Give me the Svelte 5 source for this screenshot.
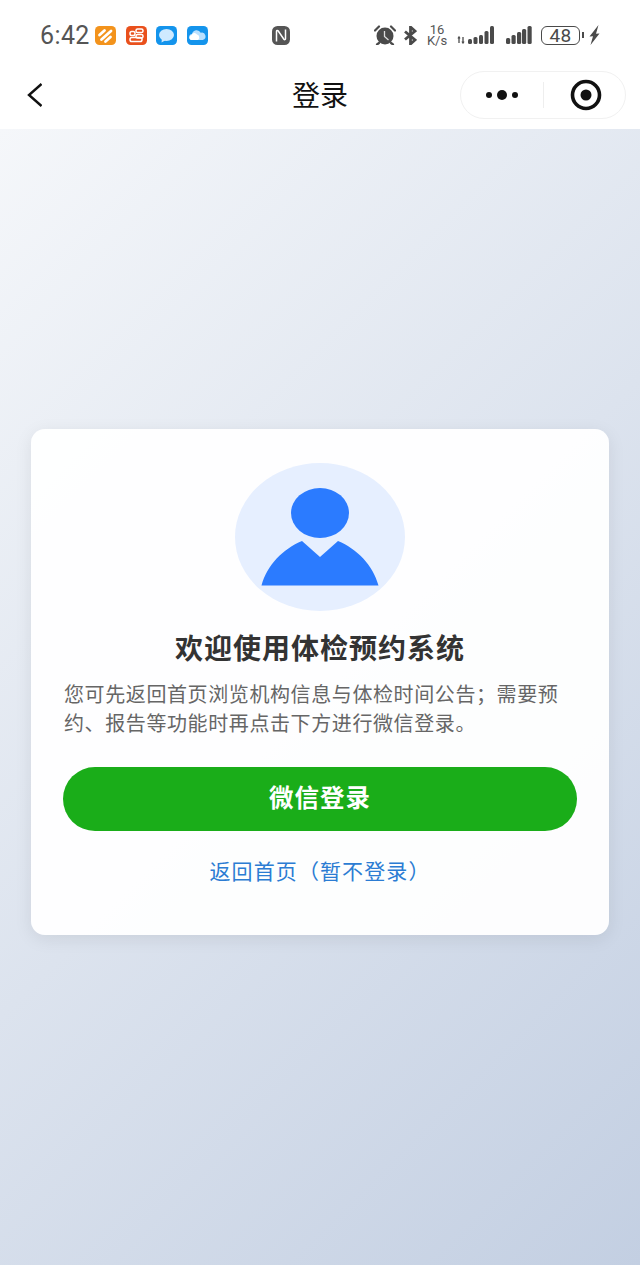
<script>
	const signalA = [
		[11, 5], [16.5, 7], [22, 9], [27.5, 13], [33, 18]
	];
	const signalB = [
		[0, 6], [5.5, 9], [11, 12], [16, 15], [21.5, 18]
	];
</script>

<div class="page">
	<header class="top">
		<div class="status">
			<span class="time">6:42</span>
			<div class="apps">
				<svg class="app" viewBox="0 0 21 19">
					<rect width="21" height="19" rx="4.5" fill="#f3931c" />
					<path d="M4.500 9l5-4.500M6.500 13.500l9.500-8.500M10.500 15.500l5-4.500" stroke="#fff" stroke-width="2.800" stroke-linecap="round" fill="none" />
				</svg>
				<svg class="app" viewBox="0 0 21 19">
					<rect width="21" height="19" rx="4.5" fill="#e9501c" />
					<g fill="none" stroke="#fff" stroke-width="1.500">
						<rect x="10" y="3" width="7" height="3.600" rx="1.600" />
						<rect x="10" y="8.400" width="7" height="3.600" rx="1.600" />
						<rect x="4" y="5.500" width="5" height="4" rx="1.800" />
						<rect x="4" y="11.500" width="12" height="4" rx="1.800" />
					</g>
				</svg>
				<svg class="app" viewBox="0 0 21 19">
					<rect width="21" height="19" rx="4.5" fill="#1494ec" />
					<ellipse cx="10.500" cy="9" rx="7.500" ry="6" fill="#cfeaff" />
					<path d="M6 12.500l-.5 4 4.500-2.500z" fill="#cfeaff" />
				</svg>
				<svg class="app" viewBox="0 0 21 19">
					<rect width="21" height="19" rx="4.5" fill="#1494ec" />
					<path d="M5.500 14a3 3 0 0 1-.4-6 4.600 4.600 0 0 1 8.600-1.200A3.700 3.700 0 0 1 15.800 14z" fill="#b9e0ff" />
					<path d="M4 14a2.600 2.600 0 0 1 .6-5 3 3 0 0 1 5.400-.4A3 3 0 0 1 11 14z" fill="#fff" />
				</svg>
			</div>
			<svg class="nfc" viewBox="0 0 18 19">
				<rect width="18" height="19" rx="5.500" fill="#555" />
				<path d="M4.500 15.500V5.500c0-1 1-1.300 1.600-.7l5.800 8.400c.6.800 1.600.5 1.600-.5V3.500" fill="none" stroke="#fff" stroke-width="1.500" />
			</svg>
			<div class="indicators">
				<svg class="alarm" viewBox="0 0 22 20">
					<circle cx="11" cy="11" r="8.500" fill="#4a4a4a" />
					<path d="M1 5.500L5 1.500M21 5.500L17 1.500M5 18l-2 1.500M17 18l2 1.500" stroke="#4a4a4a" stroke-width="2.200" stroke-linecap="round" />
					<path d="M10.500 6v5.500l4 3.500" stroke="#ddd" stroke-width="1.300" fill="none" />
				</svg>
				<svg class="bt" viewBox="0 0 13 19">
					<path d="M1 5.500l10 8.500-4.500 4V1l4.500 4-10 8.500" fill="none" stroke="#4a4a4a" stroke-width="2.800" />
				</svg>
				<div class="speed"><span>16</span><span>K/s</span></div>
				<svg class="signal-a" viewBox="0 0 37 18">
					<path d="M2 11v6M1 12.500l1-1.500 1 1.500M6 11v6M5 15.500l1 1.500 1-1.500" stroke="#4a4a4a" stroke-width="1.300" fill="none" />
					{#each signalA as [x, h]}
						<rect x={x} y={18 - h} width="4" height={h} rx="1.500" fill="#4a4a4a" />
					{/each}
				</svg>
				<svg class="signal-b" viewBox="0 0 26 18">
					{#each signalB as [x, h]}
						<rect x={x} y={18 - h} width="4.200" height={h} rx="1.500" fill="#4a4a4a" />
					{/each}
				</svg>
				<div class="battery">
					<span class="level">48</span>
					<i class="nub"></i>
				</div>
				<svg class="bolt" viewBox="0 0 11 20">
					<path d="M9.500 0L.5 11.500l3.500-.3L1.500 20 10.500 8.500 7 8.800z" fill="#4a4a4a" />
				</svg>
			</div>
		</div>
		<nav class="nav">
			<svg class="back" viewBox="0 0 15 24">
				<path d="M14.500 1L2 12l12.500 11" fill="none" stroke="#111" stroke-width="2.400" />
			</svg>
			<h1>登录</h1>
			<div class="capsule">
				<div class="more"><i></i><i class="big"></i><i></i></div>
				<span class="divider"></span>
				<svg class="target" viewBox="0 0 32 32">
					<circle cx="16" cy="16" r="13.500" fill="none" stroke="#111" stroke-width="3.600" />
					<circle cx="16" cy="16" r="5.500" fill="#111" />
				</svg>
			</div>
		</nav>
	</header>

	<main>
		<section class="card">
			<div class="avatar">
				<svg viewBox="0 0 170 148">
					<ellipse cx="85" cy="50" rx="29" ry="25" fill="#2b7bff" />
					<path d="M26.500 122.500C32 102 48 86 67 78L85 94 103 78C122 86 138 102 143.500 122.500Z" fill="#2b7bff" />
				</svg>
			</div>
			<h2>欢迎使用体检预约系统</h2>
			<p>您可先返回首页浏览机构信息与体检时间公告；需要预约、报告等功能时再点击下方进行微信登录。</p>
			<button class="login">微信登录</button>
			<a class="home" href="#home">返回首页（暂不登录）</a>
		</section>
	</main>
</div>

<style>
	:global(body) {
		margin: 0;
		font-family: "Noto Sans CJK SC", "Noto Sans", sans-serif;
	}

	.page {
		width: 640px;
		height: 1265px;
		display: flex;
		flex-direction: column;
	}

	.top {
		background: #fff;
		height: 129px;
		flex: none;
	}

	.status {
		height: 70px;
		display: flex;
		align-items: center;
		padding-left: 40px;
		box-sizing: border-box;
	}

	.time {
		font-family: Roboto, sans-serif;
		font-size: 25px;
		color: #555;
		width: 49px;
		letter-spacing: 0.4px;
	}

	.apps {
		display: flex;
		gap: 9.7px;
		margin-left: 6px;
	}

	.app {
		width: 21px;
		height: 19px;
		display: block;
	}

	.nfc {
		width: 18px;
		height: 19px;
		margin-left: 64px;
	}

	.indicators {
		display: flex;
		align-items: center;
		margin-left: 84px;
	}

	.alarm {
		width: 22px;
		height: 20px;
	}

	.bt {
		width: 13px;
		height: 19px;
		margin-left: 8px;
	}

	.speed {
		display: flex;
		flex-direction: column;
		align-items: center;
		width: 22px;
		margin-left: 9px;
		font-family: Roboto, sans-serif;
		font-size: 13px;
		line-height: 11.5px;
		color: #555;
	}

	.signal-a {
		width: 37px;
		height: 18px;
		margin-left: 9px;
	}

	.signal-b {
		width: 26px;
		height: 18px;
		margin-left: 12px;
	}

	.battery {
		position: relative;
		width: 39px;
		height: 19px;
		margin-left: 9px;
		border: 1.5px solid #4a4a4a;
		border-radius: 6px;
		box-sizing: border-box;
		display: flex;
		align-items: center;
		justify-content: center;
	}

	.level {
		font-family: Roboto, sans-serif;
		font-size: 19px;
		line-height: 1;
		color: #4a4a4a;
		letter-spacing: 0.5px;
	}

	.nub {
		position: absolute;
		right: -5px;
		top: 5px;
		width: 2px;
		height: 6px;
		background: #4a4a4a;
	}

	.bolt {
		width: 11px;
		height: 20px;
		margin-left: 9px;
	}

	.nav {
		position: relative;
		height: 59px;
		display: flex;
		align-items: center;
		justify-content: space-between;
		padding: 0 14px 10px 27px;
		box-sizing: border-box;
	}

	.back {
		width: 15px;
		height: 24px;
	}

	h1 {
		position: absolute;
		left: 0;
		right: 0;
		top: 4px;
		margin: 0;
		text-align: center;
		font-size: 28px;
		line-height: 40px;
		font-weight: 400;
		color: #111;
	}

	.capsule {
		width: 166px;
		height: 48px;
		border: 1px solid #f1f1f1;
		border-radius: 24px;
		box-sizing: border-box;
		display: flex;
		align-items: center;
		background: #fff;
	}

	.more {
		width: 82px;
		display: flex;
		align-items: center;
		justify-content: center;
		gap: 5px;
	}

	.more i {
		width: 6px;
		height: 6px;
		border-radius: 50%;
		background: #111;
	}

	.more i.big {
		width: 10px;
		height: 10px;
	}

	.divider {
		width: 1px;
		height: 26px;
		background: #eee;
	}

	.target {
		width: 32px;
		height: 32px;
		margin-left: 26px;
	}

	main {
		flex: 1;
		background: linear-gradient(135deg, #f5f7fa 0%, #c3cfe2 100%);
		display: flex;
		justify-content: center;
		padding-top: 300px;
		box-sizing: border-box;
	}

	.card {
		width: 578px;
		height: 506px;
		box-sizing: border-box;
		padding: 34px 32px 0;
		background: rgba(255, 255, 255, 0.95);
		border-radius: 14px;
		box-shadow: 0 4px 18px rgba(0, 0, 0, 0.08);
		display: flex;
		flex-direction: column;
		align-items: center;
	}

	.avatar {
		width: 170px;
		height: 148px;
		flex: none;
		border-radius: 50%;
		background: #e6efff;
	}

	.avatar svg {
		display: block;
		width: 170px;
		height: 148px;
	}

	h2 {
		margin: 16px 0 0;
		font-size: 28px;
		letter-spacing: 1px;
		line-height: 40px;
		font-weight: 700;
		color: #333;
		text-align: center;
	}

	p {
		margin: 12px 0 0;
		width: 100%;
		box-sizing: border-box;
		padding-left: 1px;
		font-size: 20px;
		letter-spacing: 0.6px;
		line-height: 29px;
		color: #666;
	}

	.login {
		margin-top: 30px;
		width: 100%;
		height: 64px;
		flex: none;
		border: none;
		border-radius: 32px;
		background: #1aad19;
		color: #fff;
		font-family: inherit;
		font-size: 24.5px;
		letter-spacing: 1px;
		font-weight: 700;
		padding: 0 0 5px;
	}

	.home {
		margin-top: 24px;
		font-size: 21px;
		letter-spacing: 1.1px;
		line-height: 30px;
		color: #2b7cd3;
		text-decoration: none;
	}
</style>
